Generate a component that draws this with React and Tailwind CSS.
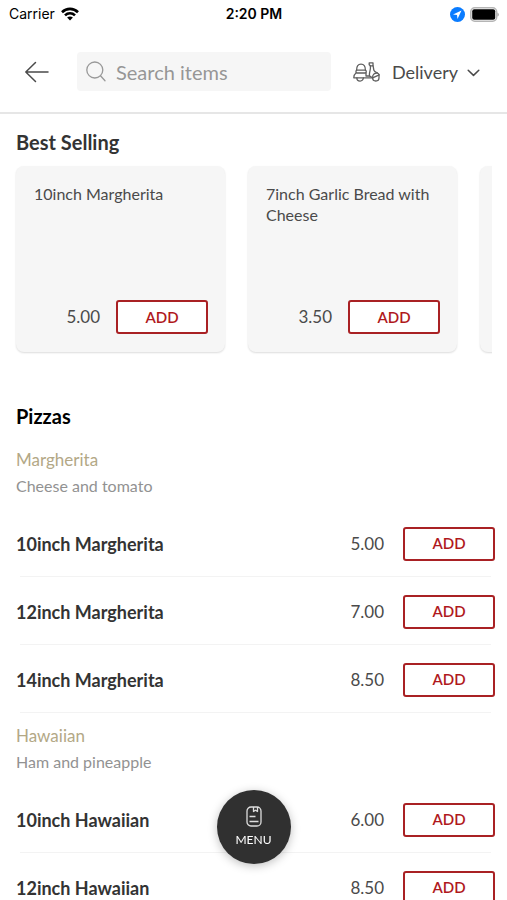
import React, { useState } from 'react';

const bestSelling = [
  { name: '10inch Margherita', price: '5.00' },
  { name: '7inch Garlic Bread with Cheese', price: '3.50' },
  { name: '', price: '' },
];

const pizzas = [
  {
    name: 'Margherita',
    description: 'Cheese and tomato',
    items: [
      { name: '10inch Margherita', price: '5.00' },
      { name: '12inch Margherita', price: '7.00' },
      { name: '14inch Margherita', price: '8.50' },
    ],
  },
  {
    name: 'Hawaiian',
    description: 'Ham and pineapple',
    items: [
      { name: '10inch Hawaiian', price: '6.00' },
      { name: '12inch Hawaiian', price: '8.50' },
    ],
  },
];

function AddButton() {
  return (
    <button className="h-[34px] w-[92px] shrink-0 rounded-[3px] border-2 border-[#a92124] bg-white text-[15px] font-semibold text-[#b0191d]">
      ADD
    </button>
  );
}

function StatusBar() {
  return (
    <div className="grid h-7 grid-cols-3 items-center pr-2 pl-[9px] font-['Inter'] text-black">
      <div className="flex items-center gap-[6px] text-sm">
        <span>Carrier</span>
        <svg width="18" height="14" viewBox="0 0 18 14" fill="none" stroke="#000" strokeWidth="2.6">
          <path d="M1 5.2C5.6 .7 12.4 .7 17 5.2" />
          <path d="M4 8.4C6.8 5.6 11.2 5.6 14 8.4" />
          <path d="M9 13.4L6.1 10.5C7.8 9 10.2 9 11.9 10.5Z" fill="#000" stroke="none" />
        </svg>
      </div>
      <div className="text-center text-sm font-semibold">2:20 PM</div>
      <div className="flex items-center justify-end gap-[5px]">
        <svg width="15" height="15" viewBox="0 0 15 15">
          <circle cx="7.5" cy="7.5" r="7.5" fill="#0a7cff" />
          <path d="M11.5 3.5L3 7.5L7 8L7.5 12Z" fill="#fff" />
        </svg>
        <svg width="29" height="15" viewBox="0 0 29 15">
          <rect x=".8" y=".8" width="25.8" height="13.4" rx="4" fill="#fff" stroke="#b5b5b5" strokeWidth="1.6" />
          <rect x="2.2" y="2.2" width="23" height="10.6" rx="2" fill="#000" />
          <path d="M27.4 5.4C29.4 6.2 29.4 8.8 27.4 9.6Z" fill="#aaa" />
        </svg>
      </div>
    </div>
  );
}

function ScooterIcon() {
  return (
    <svg width="27" height="20" viewBox="0 0 27 20" fill="none" stroke="#5f5f5f" strokeWidth="1.3" strokeLinejoin="round" strokeLinecap="round">
      <path d="M3.6 8.2C3.6 4.2 5 2.2 8 2.2S12.4 4.2 12.4 8.2" />
      <rect x="3" y="8.2" width="10.2" height="2.8" rx="1" />
      <path d="M3 11C1.6 12 .8 13.4 .8 15.8H4M10.4 15.8H19.6M13 11V14H16.6" />
      <path d="M3.8 15.8A3.3 3.3 0 0 0 10.4 15.8Z" />
      <path d="M16.2 .8H20V3.8H17.4L16.2 2.8Z" />
      <path d="M17.2 3.8C18.4 7 15.6 10.4 16.6 14L19.6 15.8L26.2 12.8C25.4 10.4 22 10.6 21 8.4C20.4 7 20.6 5.2 20 3.8" />
      <path d="M19.6 15.8C19.2 12.4 22 10.8 24.4 11" />
      <path d="M19.6 15.8A3.2 3.2 0 0 0 26 15.8V13" />
    </svg>
  );
}

function Header() {
  const [search, setSearch] = useState('');

  return (
    <header className="shrink-0 border-b-2 border-[#e6e6e6] bg-white">
      <StatusBar />
      <div className="flex items-center pt-6 pr-[27px] pb-[21px] pl-6">
        <button aria-label="Back">
          <svg width="26" height="22" viewBox="0 0 26 22" fill="none" stroke="#4a4a4a" strokeWidth="1.5" strokeLinecap="round" strokeLinejoin="round">
            <path d="M24 11H1.8M11.5 1.5L1.8 11L11.5 20.5" />
          </svg>
        </button>
        <label className="ml-[27px] flex h-[39px] min-w-0 flex-1 items-center gap-[10px] rounded-[4px] bg-[#f6f6f6] pl-[9px]">
          <svg className="shrink-0" width="20" height="21" viewBox="0 0 20 21" fill="none" stroke="#999" strokeWidth="1.3" strokeLinecap="round">
            <circle cx="8.8" cy="9" r="8" />
            <path d="M14.5 14.8L19 19.8" />
          </svg>
          <input
            type="text"
            aria-label="Search items"
            placeholder="Search items"
            className="w-full min-w-0 bg-transparent text-xl placeholder-[#969696] outline-none"
            value={search}
            onChange={e => setSearch(e.target.value)}
          />
        </label>
        <button className="ml-[22px] flex items-center text-lg text-[#4a4a4a]">
          <ScooterIcon />
          <span className="ml-3">Delivery</span>
          <svg className="mt-[2px] ml-[9px]" width="13" height="8" viewBox="0 0 13 8" fill="none" stroke="#4a4a4a" strokeWidth="1.5" strokeLinecap="round" strokeLinejoin="round">
            <path d="M1.2 1.2L6.5 6.4L11.8 1.2" />
          </svg>
        </button>
      </div>
    </header>
  );
}

function BestSellingCard({ item }) {
  return (
    <li className="flex h-[186px] w-[209px] shrink-0 flex-col justify-between rounded-lg bg-[#f6f6f6] pt-[17px] pr-[17px] pb-[18px] pl-[18px] shadow-[0_1px_2px_rgba(0,0,0,0.14)]">
      <h3 className="text-base leading-[21px] text-[#4a4a4a]">{item.name}</h3>
      {item.price && (
        <div className="flex items-center justify-end gap-4">
          <span className="text-[17px] text-[#4a4a4a]">{item.price}</span>
          <AddButton />
        </div>
      )}
    </li>
  );
}

function Category({ category }) {
  return (
    <section>
      <div className="py-[10px]">
        <h3 className="text-[17px] leading-[26px] text-[#b3a886]">{category.name}</h3>
        <p className="text-base leading-[26px] text-[#929292]">{category.description}</p>
      </div>
      <ul>
        {category.items.map((item, index) => (
          <li key={index}>
            <div className="flex h-[67px] items-center pt-[2px]">
              <h4 className="flex-1 text-lg font-bold text-[#333]">{item.name}</h4>
              <span className="mr-[19px] text-[17px] text-[#4a4a4a]">{item.price}</span>
              <AddButton />
            </div>
            <div className="mr-1 ml-1 h-px bg-[#f3f3f3]" />
          </li>
        ))}
      </ul>
    </section>
  );
}

export default function App() {
  return (
    <div className="flex h-screen flex-col bg-white font-['Lato',sans-serif]">
      <Header />
      <main className="min-h-0 flex-1 overflow-y-auto [scrollbar-width:none]">
        <section className="mr-[15px] pt-4">
          <h2 className="pl-4 text-xl leading-6 font-bold text-[#333]">Best Selling</h2>
          <ul className="flex gap-[23px] overflow-x-auto pt-3 pb-2 pl-4 [scrollbar-width:none]">
            {bestSelling.map((item, index) => (
              <BestSellingCard key={index} item={item} />
            ))}
          </ul>
        </section>

        <section className="pt-11 pr-3 pl-4">
          <h2 className="mb-[9px] text-xl leading-6 font-bold text-black">Pizzas</h2>
          {pizzas.map(category => (
            <Category key={category.name} category={category} />
          ))}
        </section>
      </main>

      <button className="fixed bottom-9 left-1/2 flex size-[74px] -translate-x-1/2 flex-col items-center justify-center gap-[5px] rounded-full bg-[#303030] text-xs text-white shadow-[0_2px_10px_rgba(0,0,0,0.25)]">
        <svg width="16" height="21" viewBox="0 0 16 21" fill="none" stroke="#ddd" strokeWidth="1.3" strokeLinejoin="round">
          <rect x="1" y="1" width="14" height="19" rx="4" />
          <path d="M7.5 1V5.5L9.5 4.2L11.5 5.5V1M3.5 10.5H9.5M3.5 15.5H12.5" />
        </svg>
        <span>MENU</span>
      </button>
    </div>
  );
}
